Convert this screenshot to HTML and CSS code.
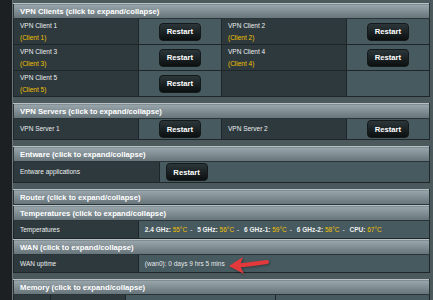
FILE: index.html
```html
<!DOCTYPE html>
<html lang="en">
  <head>
    <meta charset="UTF-8" />
    <meta name="viewport" content="width=device-width, initial-scale=1.0" />
    <title>System Information</title>
    <link rel="stylesheet" href="styles.css">
  </head>
  <body>
    <div class="page">
      <div class="sidebar"></div>
      <div class="content">
        <table class="form-table">
          <colgroup><col class="w30"><col class="w20"><col class="w30"><col class="w20"></colgroup>
          <thead><tr><td colspan="4">VPN Clients (click to expand/collapse)</td></tr></thead>
          <tbody>
            <tr class="row-tall">
              <th>VPN Client 1<br><span class="hint">(Client 1)</span></th>
              <td class="center"><button class="btn">Restart</button></td>
              <th>VPN Client 2<br><span class="hint">(Client 2)</span></th>
              <td class="center"><button class="btn">Restart</button></td>
            </tr>
            <tr class="row-tall">
              <th>VPN Client 3<br><span class="hint">(Client 3)</span></th>
              <td class="center"><button class="btn">Restart</button></td>
              <th>VPN Client 4<br><span class="hint">(Client 4)</span></th>
              <td class="center"><button class="btn">Restart</button></td>
            </tr>
            <tr class="row-tall">
              <th>VPN Client 5<br><span class="hint">(Client 5)</span></th>
              <td class="center"><button class="btn">Restart</button></td>
              <th></th>
              <td></td>
            </tr>
          </tbody>
        </table>

        <table class="form-table">
          <colgroup><col class="w30"><col class="w20"><col class="w30"><col class="w20"></colgroup>
          <thead><tr><td colspan="4">VPN Servers (click to expand/collapse)</td></tr></thead>
          <tbody>
            <tr class="row-btn">
              <th>VPN Server 1</th>
              <td class="center"><button class="btn">Restart</button></td>
              <th>VPN Server 2</th>
              <td class="center"><button class="btn">Restart</button></td>
            </tr>
          </tbody>
        </table>

        <table class="form-table">
          <colgroup><col class="w35"><col class="w65"></colgroup>
          <thead><tr><td colspan="2">Entware (click to expand/collapse)</td></tr></thead>
          <tbody>
            <tr class="row-btn">
              <th>Entware applications</th>
              <td><button class="btn">Restart</button></td>
            </tr>
          </tbody>
        </table>

        <table class="form-table">
          <colgroup><col class="w30"><col class="w70"></colgroup>
          <thead><tr><td colspan="2">Router (click to expand/collapse)</td></tr></thead>
        </table>
        <table class="form-table joined">
          <colgroup><col class="w30"><col class="w70"></colgroup>
          <thead><tr><td colspan="2">Temperatures (click to expand/collapse)</td></tr></thead>
          <tbody>
            <tr class="row">
              <th>Temperatures</th>
              <td class="temps">
                <b>2.4 GHz:</b> <span class="hint">55°C</span><span class="sep">-</span>
                <b>5 GHz:</b> <span class="hint">56°C</span><span class="sep">-</span>
                <b>6 GHz-1:</b> <span class="hint">59°C</span><span class="sep">-</span>
                <b>6 GHz-2:</b> <span class="hint">58°C</span><span class="sep">-</span>
                <b>CPU:</b> <span class="hint">67°C</span>
              </td>
            </tr>
          </tbody>
        </table>
        <table class="form-table joined">
          <colgroup><col class="w30"><col class="w70"></colgroup>
          <thead><tr><td colspan="2">WAN (click to expand/collapse)</td></tr></thead>
          <tbody>
            <tr class="row">
              <th>WAN uptime</th>
              <td class="uptime">(wan0): 0 days 9 hrs 5 mins
                <svg class="arrow" width="44" height="22" viewBox="0 0 44 22">
                  <path d="M12 11.5 Q26 10 40 8" fill="none" stroke="#e23a3c" stroke-width="4" stroke-linecap="round"/>
                  <polygon points="2,12 16,3 13,11.5 17,20" fill="#e23a3c"/>
                </svg>
              </td>
            </tr>
          </tbody>
        </table>

        <table class="form-table">
          <colgroup><col class="w9"><col class="w18"><col class="w36"><col class="w37"></colgroup>
          <thead><tr><td colspan="4">Memory (click to expand/collapse)</td></tr></thead>
          <tbody>
            <tr class="row">
              <th></th>
              <th></th>
              <td></td>
              <td></td>
            </tr>
          </tbody>
        </table>
      </div>
    </div>
  </body>
</html>
```

FILE: styles.css
```css
body {
  margin: 0;
  padding: 0;
  background-color: #4b585c;
  font-family: "Liberation Sans", Arial, sans-serif;
  color: #eef0f0;
  overflow: hidden;
}
.page {
  display: flex;
  height: 300px;
}
.sidebar {
  width: 12px;
  flex-shrink: 0;
  background-color: #1c2022;
  border-right: 1px solid #6b777b;
}
.content {
  flex: 1;
  padding: 3px 3px 0 0;
}
.form-table {
  width: 100%;
  table-layout: fixed;
  border-collapse: collapse;
  margin-bottom: 6px;
}
.form-table.joined {
  margin-top: -6px;
}
.w9 { width: 9%; }
.w18 { width: 18%; }
.w20 { width: 20%; }
.w30 { width: 30%; }
.w35 { width: 35%; }
.w36 { width: 36%; }
.w37 { width: 37%; }
.w65 { width: 65%; }
.w70 { width: 70%; }
.form-table thead td {
  height: 14px;
  padding: 0 6px;
  font-size: 7.7px;
  font-weight: bold;
  color: #ffffff;
  background: linear-gradient(#9aa6ab, #65747a);
  border: 1px solid #2a3336;
  border-top-color: #b7c1c4;
}
.form-table th,
.form-table td {
  border: 1px solid #1e2629;
}
.form-table th {
  padding: 0 6px;
  text-align: left;
  font-size: 6.5px;
  font-weight: normal;
  line-height: 12px;
  color: #eef0f0;
  background-color: #2d393d;
}
.form-table tbody td {
  padding: 0 6px;
  font-size: 6.5px;
  background-color: #475a5f;
}
.row-tall {
  height: 26px;
}
.row-btn {
  height: 21px;
}
.row {
  height: 18px;
}
.center {
  text-align: center;
}
.hint {
  color: #f2c200;
}
.btn {
  display: inline-block;
  width: 42px;
  height: 18px;
  padding: 0;
  vertical-align: middle;
  font-family: "Liberation Sans", Arial, sans-serif;
  font-size: 7.7px;
  font-weight: bold;
  color: #ffffff;
  background: linear-gradient(#2c3639, #0b0f10);
  border: 1px solid #141a1c;
  border-radius: 4px;
}
.temps {
  white-space: nowrap;
}
.temps b {
  font-weight: bold;
}
.sep {
  padding: 0 3px;
}
.uptime {
  position: relative;
  color: #e6e9ea;
}
.arrow {
  position: absolute;
  left: 88px;
  top: -1px;
  filter: drop-shadow(1px 1px 1px rgba(0, 0, 0, 0.35));
}
```
